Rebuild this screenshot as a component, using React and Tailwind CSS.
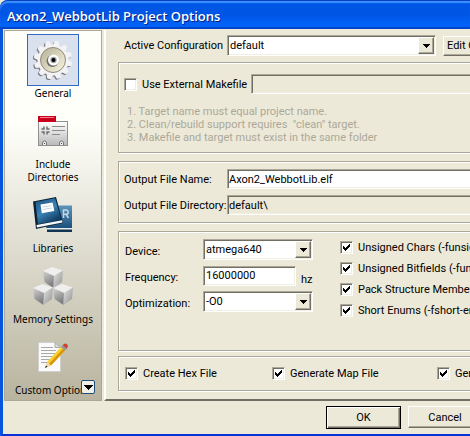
import { useState } from "react"
import clsx from "clsx"

const hints = [
  "1. Target name must equal project name.",
  '2. Clean/rebuild support requires  "clean" target.',
  "3. Makefile and target must exist in the same folder",
]

const compilerFlags = [
  "Unsigned Chars (-funsigned-char)",
  "Unsigned Bitfields (-funsigned-bitfields)",
  "Pack Structure Members (-fpack-struct)",
  "Short Enums (-fshort-enums)",
]

const GEAR_ANGLES = [0, 30, 60, 90, 120, 150, 180, 210, 240, 270, 300, 330]

function GearIcon() {
  return (
    <svg width="42" height="42" viewBox="0 0 42 42" aria-hidden="true">
      <defs>
        <linearGradient id="gearDish" x1="0" y1="0" x2="1" y2="1">
          <stop offset="0" stopColor="#b5b096" />
          <stop offset="0.6" stopColor="#dedac2" />
          <stop offset="1" stopColor="#f8f5e4" />
        </linearGradient>
      </defs>
      <g fill="#77777e" transform="translate(-1 1)">
        {GEAR_ANGLES.map((a) => (
          <path key={a} d="M17.5 8 L18.8 2.2 Q21 1 23.2 2.2 L24.5 8 Z" transform={`rotate(${a + 12} 21 21)`} />
        ))}
        <circle cx="21" cy="21" r="15.5" />
      </g>
      <g fill="#f3f3f5">
        {GEAR_ANGLES.map((a) => (
          <path key={a} d="M17.5 8 L18.8 2.2 Q21 1 23.2 2.2 L24.5 8 Z" transform={`rotate(${a + 12} 21 21)`} />
        ))}
        <circle cx="21" cy="21" r="15.5" />
      </g>
      <circle cx="21" cy="21" r="12.5" fill="url(#gearDish)" stroke="#8f8b78" strokeWidth="1" />
      <circle cx="20.5" cy="22" r="6" fill="#6e6e70" />
      <circle cx="21.5" cy="21" r="5.5" fill="#fff" />
      <circle cx="21.5" cy="21" r="3.2" fill="#a4a4a8" />
      <circle cx="21.5" cy="21" r="2" fill="#000" />
    </svg>
  )
}

function IncludeIcon() {
  return (
    <svg width="30" height="30" viewBox="0 0 30 30" aria-hidden="true">
      <defs>
        <linearGradient id="cardFace" x1="0" y1="0" x2="0" y2="1">
          <stop offset="0" stopColor="#ffffff" />
          <stop offset="1" stopColor="#b9b9b9" />
        </linearGradient>
      </defs>
      <rect x="0.5" y="5.5" width="29" height="24" fill="url(#cardFace)" stroke="#8f8f8f" />
      <rect x="0" y="0" width="18" height="6" fill="#c8001c" />
      <rect x="2" y="1" width="14" height="1" fill="#f0808c" />
      <path d="M14 10.5h13M14 14.5h13M14 18.5h8" stroke="#8c8c8c" strokeWidth="1" />
      <path d="M6 10.5v2.5h-2.5M9 10.5v2.5h2.5M6 18.5v-2.5h-2.5M9 18.5v-2.5h2.5" fill="none" stroke="#6a6a6a" strokeWidth="1.4" />
      <path d="M4.500 29v-2a2 2 0 0 1 4 0v2M21.500 29v-2a2 2 0 0 1 4 0v2" fill="#eee" stroke="#777" />
      <path d="M6 27h1v1H6zM23 27h1v1h-1z" fill="#444" />
    </svg>
  )
}

function LibrariesIcon() {
  return (
    <svg width="40" height="36" viewBox="0 0 40 36" aria-hidden="true">
      <defs>
        <linearGradient id="bookFront" x1="0" y1="0" x2="0.6" y2="1">
          <stop offset="0" stopColor="#1c5280" />
          <stop offset="0.55" stopColor="#3a82b4" />
          <stop offset="1" stopColor="#0f3a60" />
        </linearGradient>
        <linearGradient id="bookBack" x1="0" y1="0" x2="0" y2="1">
          <stop offset="0" stopColor="#5d94ba" />
          <stop offset="1" stopColor="#1b507c" />
        </linearGradient>
      </defs>
      <path d="M20 8.5h19V31H13z" fill="url(#bookBack)" />
      <path d="M14 31h25v1.5H14z" fill="#e8eef2" />
      <path d="M14 32.5h25v2.5H14z" fill="#143552" />
      <path d="M30.5 21v-8h2.5a2 2 0 0 1 0 4.3h-2.5m2.5 0 2.5 3.7M25 13l2.5 8" fill="none" stroke="#c5d9e6" strokeWidth="1.5" />
      <path d="M0 4.5 23 0l7 26L3 32z" fill="#0d2135" />
      <path d="M2.5 5 22 1.2l6.5 22L5 27z" fill="url(#bookFront)" />
      <path d="M3.5 28 29 23.2l.5 2.3L4 30.6z" fill="#f4f7f8" />
      <path d="M7.5 7.5 19.5 5.5 21.3 14 8.8 16.2z" fill="#fff" />
      <path d="M9.5 10l9-1.5M10 12.5l9-1.5" stroke="#b3cde0" strokeWidth="0.8" />
    </svg>
  )
}

function MemoryIcon() {
  return (
    <svg width="40" height="38" viewBox="0 0 40 38" aria-hidden="true">
      <defs>
        <linearGradient id="cubeLeft" x1="0" y1="0" x2="0.4" y2="1">
          <stop offset="0" stopColor="#d4d4d4" />
          <stop offset="1" stopColor="#7d7d7d" />
        </linearGradient>
        <linearGradient id="cubeRight" x1="0" y1="0" x2="1" y2="1">
          <stop offset="0" stopColor="#e4e4e4" />
          <stop offset="1" stopColor="#8f8f8f" />
        </linearGradient>
      </defs>
      {[
        [10, 0],
        [0, 17],
        [20, 17],
      ].map(([x, y]) => (
        <g key={`${x}-${y}`} transform={`translate(${x} ${y})`}>
          <path d="M0 4 9 0l11 3.5-9 5.5z" fill="#efefef" />
          <path d="M0 4l11 5-.5 12L1.5 15z" fill="url(#cubeLeft)" />
          <path d="M20 3.5 11 9l-.5 12 8.5-6z" fill="url(#cubeRight)" />
        </g>
      ))}
    </svg>
  )
}

function CustomIcon() {
  return (
    <svg width="30" height="30" viewBox="0 0 30 30" aria-hidden="true">
      <path d="M0.5 0.5h17l5 5v24h-22z" fill="#fafafa" stroke="#d0d0d0" />
      <path d="M17 0.5v5h5.5z" fill="#ddd" stroke="#aaa" />
      <path d="M3 5.5h12M3 8.5h15M3 11.5h15M3 14.5h12M3 17.5h9M3 20.5h7" stroke="#a8a8a8" />
      <path d="M7 26l2-6 4 3.5z" fill="#f0d7a8" />
      <path d="M7 26l1-2.6 1.6 1.3z" fill="#222" />
      <path d="M9 20 23 5l4 3.5L13 23.5z" fill="#fbd12e" />
      <path d="M11 21.7 25 6.7l2 1.8L13 23.5z" fill="#d8960f" />
      <path d="M23 5l1.6-1.7 4 3.5L27 8.5z" fill="#8d97a3" />
      <path d="M24.6 3.3Q27 .5 29 2.2t-.4 4.6z" fill="#c9452f" />
    </svg>
  )
}

const sections = [
  { name: "General", Icon: GearIcon },
  { name: "Include Directories", Icon: IncludeIcon },
  { name: "Libraries", Icon: LibrariesIcon },
  { name: "Memory Settings", Icon: MemoryIcon },
  { name: "Custom Options", Icon: CustomIcon },
]

const sunken =
  "border border-t-[#aca899] border-l-[#aca899] border-r-white border-b-white shadow-[inset_1px_1px_0_#716f64,inset_-1px_-1px_0_#f1efe2]"
const raised =
  "border border-t-white border-l-white border-r-[#716f64] border-b-[#716f64] shadow-[inset_-1px_-1px_0_#aca899] bg-[#ece9d8]"

function Group({ className, children }) {
  return (
    <div className={clsx("border border-[#aca899] shadow-[inset_1px_1px_0_#fff,1px_1px_0_#fff]", className)}>
      {children}
    </div>
  )
}

function Select({ id, value, className }) {
  return (
    <div className={clsx("relative shrink-0", className)}>
      <select id={id} defaultValue={value} className={clsx("block h-[21px] w-full appearance-none bg-white pl-[2px] pr-5 outline-none", sunken)}>
        <option>{value}</option>
      </select>
      <span className={clsx("pointer-events-none absolute inset-y-[2px] right-[2px] flex w-4 items-center justify-center", raised)}>
        <svg width="7" height="4" viewBox="0 0 7 4" shapeRendering="crispEdges" aria-hidden="true">
          <path d="M0 0h7v1h-1v1h-1v1h-1v1h-1v-1h-1v-1h-1v-1h-1z" />
        </svg>
      </span>
    </div>
  )
}

function Checkbox({ label, checked = false, className }) {
  const [on, setOn] = useState(checked)
  return (
    <label className={clsx("flex shrink-0 items-center gap-[5px] leading-[13px]", className)}>
      <span className={clsx("relative flex size-[13px] shrink-0 bg-white", sunken)}>
        <input type="checkbox" checked={on} onChange={() => setOn(!on)} className="absolute inset-0 appearance-none" />
        {on && (
          <svg width="11" height="11" viewBox="0 0 11 11" shapeRendering="crispEdges" aria-hidden="true">
            <path d="M2 4h1v1h1v1h1v-1h1v-1h1v-1h1v-1h1v3h-1v1h-1v1h-1v1h-1v1h-1v-1h-1v-1h-1z" />
          </svg>
        )}
      </span>
      {label}
    </label>
  )
}

function Sidebar() {
  const [active, setActive] = useState("General")
  return (
    <nav className="relative flex w-[98px] shrink-0 flex-col items-center gap-[5px] border border-[#aca899] bg-linear-to-b from-[#fffffa] from-25% to-[#b9b49f] pt-[3px] pb-[2px] font-['Noto_Sans','Open_Sans',sans-serif] text-[10px] leading-[13px]">
      {sections.map(({ name, Icon }) => (
        <button key={name} type="button" onClick={() => setActive(name)} className="flex w-[90px] flex-col items-center gap-px">
          <span className={clsx("flex size-[52px] items-center justify-center", active === name && "border border-[#316ac5] bg-[#dae1ee]")}>
            <Icon />
          </span>
          <span className={clsx(name === "Include Directories" ? "w-16 whitespace-normal" : "whitespace-nowrap")}>{name}</span>
        </button>
      ))}
      <button type="button" aria-label="Scroll down" className="absolute right-[6px] bottom-[6px] flex size-[14px] items-center justify-center rounded-xs border border-[#1c4e7c] bg-[#f2f0e6]">
        <svg width="9" height="5" viewBox="0 0 9 5" shapeRendering="crispEdges" aria-hidden="true">
          <path d="M0 0h9v1h-1v1h-1v1h-1v1h-1v1h-1v-1h-1v-1h-1v-1h-1v-1h-1z" />
        </svg>
      </button>
    </nav>
  )
}

export default function App() {
  return (
    <div className="w-full overflow-hidden whitespace-nowrap bg-[#ece9d8] font-['Roboto','Liberation_Sans',sans-serif] text-[11px] leading-[13px] text-black">
      <header className="flex h-[29px] items-center rounded-tl-lg bg-linear-to-b from-[#0058e6] via-[#0055e5] to-[#0068ff] pl-[7px] shadow-[inset_0_1px_0_#0a3fc0,inset_0_3px_1px_#3a93ff,inset_0_-2px_1px_#0043c8]">
        <h1 className="pt-1 font-['Open_Sans','Noto_Sans',sans-serif] text-[13px] font-semibold text-white [text-shadow:1px_1px_0_#0a1f80]">
          Axon2_WebbotLib Project Options
        </h1>
      </header>

      <div className="border-b-[3px] border-l-[3px] border-b-[#0831d9] border-l-[#0855dd] pt-px">
        <div className="flex pl-px">
          <Sidebar />

          <main className="ml-[2px] min-w-0 flex-1 border-b-2 border-l-2 border-b-[#716f64] border-l-white pt-[5px] pb-2 pl-3">
            <div className="flex items-center pl-[6px]">
              <label htmlFor="config" className="w-[103px] shrink-0">Active Configuration</label>
              <Select id="config" value="default" className="w-[209px]" />
              <button type="button" className={clsx("ml-[7px] h-5 shrink-0 px-[3px]", raised)}>Edit Configuration Options</button>
            </div>

            <Group className="mt-[6px] -mr-2 pt-[11px] pb-2 pl-[5px]">
              <div className="flex items-center gap-[7px]">
                <Checkbox label="Use External Makefile" className="w-[120px]" />
                <input type="text" disabled aria-label="External makefile" className={clsx("h-5 min-w-0 flex-1", sunken)} />
              </div>
              <div className="pt-[11px] pl-[3px] whitespace-pre text-[#aca899]">
                {hints.map((hint) => (
                  <p key={hint}>{hint}</p>
                ))}
              </div>
            </Group>

            <Group className="mt-2 -mr-2 flex flex-col gap-[6px] pt-[7px] pb-[7px] pl-[5px]">
              <div className="flex items-center">
                <label htmlFor="outName" className="w-[103px] shrink-0">Output File Name:</label>
                <input id="outName" type="text" defaultValue="Axon2_WebbotLib.elf" className={clsx("h-5 min-w-0 flex-1 bg-white pl-px outline-none", sunken)} />
              </div>
              <div className="flex items-center">
                <label htmlFor="outDir" className="w-[103px] shrink-0">Output File Directory:</label>
                <input id="outDir" type="text" readOnly defaultValue={"default\\"} className={clsx("h-5 min-w-0 flex-1 pl-px outline-none", sunken)} />
              </div>
            </Group>

            <Group className="mt-2 -mr-2 flex gap-[27px] pt-[7px] pb-[33px] pl-[6px]">
              <div className="flex w-[188px] shrink-0 flex-col gap-[5px]">
                <div className="flex items-center">
                  <label htmlFor="device" className="w-[78px] pt-1">Device:</label>
                  <Select id="device" value="atmega640" className="w-[110px]" />
                </div>
                <div className="flex items-center">
                  <label htmlFor="freq" className="w-[78px] pt-1">Frequency:</label>
                  <input id="freq" type="text" defaultValue="16000000" className={clsx("h-5 w-[93px] bg-white pl-[2px] outline-none", sunken)} />
                  <span className="pt-2 pl-[5px]">hz</span>
                </div>
                <div className="flex items-center">
                  <label htmlFor="optim" className="w-[78px] pt-1">Optimization:</label>
                  <Select id="optim" value="-O0" className="w-[110px]" />
                </div>
              </div>
              <div className="flex flex-col gap-2 pt-[2px]">
                {compilerFlags.map((flag) => (
                  <Checkbox key={flag} label={flag} checked />
                ))}
              </div>
            </Group>

            <Group className="mt-[5px] -mr-2 flex py-[7px] pl-[6px]">
              <Checkbox label="Create Hex File" checked className="w-[147px] py-[3px]" />
              <Checkbox label="Generate Map File" checked className="w-[165px]" />
              <Checkbox label="Generate List File" checked />
            </Group>
          </main>
        </div>

        <footer className="flex items-start justify-end gap-[7px] pt-[5px] pb-[5px]">
          <button type="button" className="h-[23px] w-[75px] border border-black bg-[#ece9d8] shadow-[inset_1px_1px_0_#fff,inset_-1px_-1px_0_#716f64,inset_-2px_-2px_0_#aca899]">OK</button>
          <button type="button" className={clsx("-mr-3 h-[22px] w-[74px]", raised)}>Cancel</button>
        </footer>
      </div>
    </div>
  )
}
